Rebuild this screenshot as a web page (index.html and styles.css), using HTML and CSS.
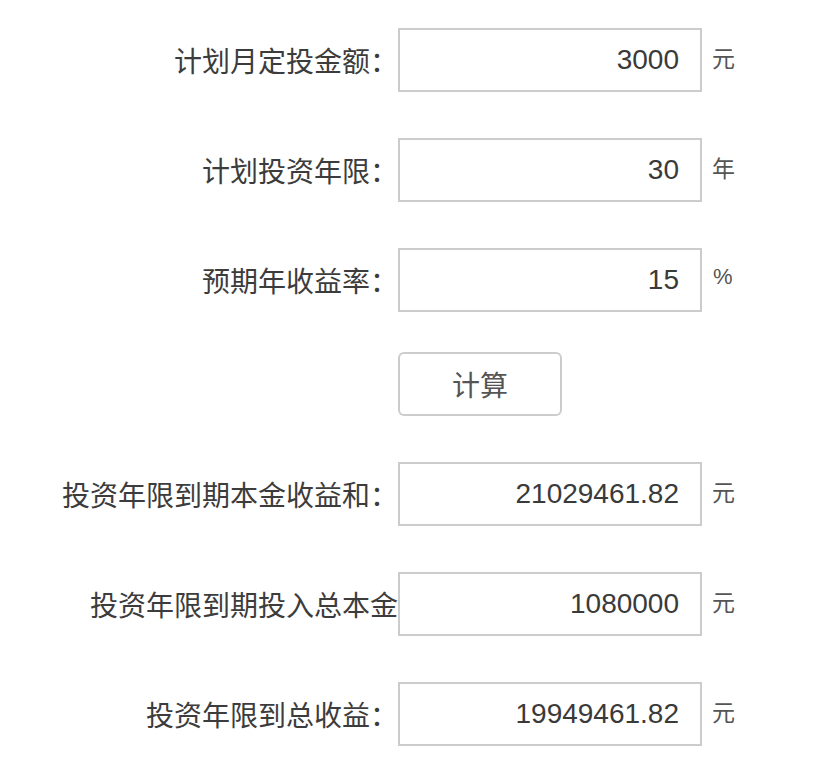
FILE: index.html
```html
<!DOCTYPE html>
<html lang="zh-CN">
<head>
<meta charset="utf-8">
<title>定投计算器</title>
<link rel="stylesheet" href="styles.css">
</head>
<body>
<form class="calc">
  <label class="label" for="f1">计划月定投金额：</label>
  <input class="field" id="f1" type="text" value="3000">
  <span class="unit">元</span>

  <label class="label" for="f2">计划投资年限：</label>
  <input class="field" id="f2" type="text" value="30">
  <span class="unit">年</span>

  <label class="label" for="f3">预期年收益率：</label>
  <input class="field" id="f3" type="text" value="15">
  <span class="unit unit-pct">%</span>

  <span class="label"></span>
  <button class="btn" type="button">计算</button>
  <span class="unit"></span>

  <label class="label" for="r1">投资年限到期本金收益和：</label>
  <input class="field" id="r1" type="text" value="21029461.82" readonly>
  <span class="unit">元</span>

  <label class="label" for="r2">投资年限到期投入总本金</label>
  <input class="field" id="r2" type="text" value="1080000" readonly>
  <span class="unit">元</span>

  <label class="label" for="r3">投资年限到总收益：</label>
  <input class="field" id="r3" type="text" value="19949461.82" readonly>
  <span class="unit">元</span>
</form>
</body>
</html>
```
FILE: styles.css
```css
html, body {
  margin: 0;
  padding: 0;
  background: #ffffff;
}

body {
  font-family: "Liberation Sans", "Noto Sans CJK SC", sans-serif;
  color: #333333;
}

.calc {
  display: grid;
  grid-template-columns: 398px 304px auto;
  grid-template-rows: 64px 64px 64px 58px 64px 64px 64px;
  row-gap: 46px;
  padding-top: 28px;
  align-items: center;
}

.label {
  justify-self: end;
  font-family: "Noto Sans CJK SC", sans-serif;
  font-size: 28px;
  line-height: 1;
  color: #3c3c3c;
  white-space: nowrap;
}

.field {
  box-sizing: border-box;
  width: 304px;
  height: 64px;
  margin: 0;
  border: 2px solid #cccccc;
  border-radius: 0;
  background: #ffffff;
  padding: 0 21px 0 10px;
  text-align: right;
  font-family: "Liberation Sans", "Noto Sans CJK SC", sans-serif;
  font-size: 28px;
  color: #3a3a3a;
  outline: none;
}

.unit {
  margin-left: 10px;
  margin-top: -6px;
  font-family: "Noto Sans CJK SC", sans-serif;
  font-size: 23px;
  line-height: 1;
  color: #555555;
}

.unit-pct {
  font-family: "Liberation Sans", sans-serif;
  font-size: 22px;
  margin-left: 11px;
}

.btn {
  box-sizing: border-box;
  align-self: start;
  width: 164px;
  height: 64px;
  margin: -6px 0 0;
  border: 2px solid #cccccc;
  border-radius: 6px;
  background: #ffffff;
  font-family: "Noto Sans CJK SC", sans-serif;
  font-size: 28px;
  color: #555555;
  padding: 0;
  cursor: pointer;
}
```
